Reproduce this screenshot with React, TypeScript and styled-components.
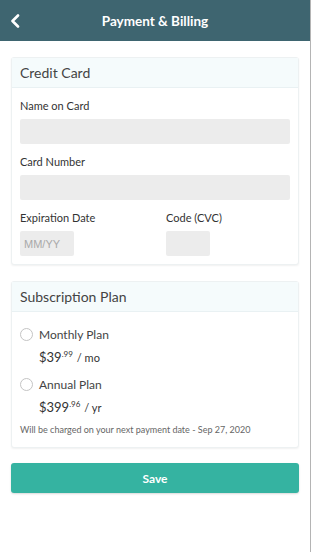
import styled, { createGlobalStyle } from 'styled-components';

const GlobalStyle = createGlobalStyle`
  html, body {
    margin: 0;
    padding: 0;
    background: #ffffff;
  }
  * {
    box-sizing: border-box;
  }
`;

const plans = [
    { name: 'Monthly Plan', whole: '$39', cents: '.99', per: '/ mo' },
    { name: 'Annual Plan', whole: '$399', cents: '.96', per: '/ yr' },
];

const App = () => {
    return (
        <Page>
            <GlobalStyle />
            {/* Header */}
            <TopBar>
                <BackButton aria-label="Back">
                    <svg width="12" height="14" viewBox="0 0 12 14">
                        <path d="M9 1.5 L3.5 7 L9 12.5" fill="none" stroke="#fff" strokeWidth="2.6" strokeLinecap="round" strokeLinejoin="round" />
                    </svg>
                </BackButton>
                <Title>Payment &amp; Billing</Title>
                <span />
            </TopBar>

            <Content>
                {/* Credit card */}
                <Card>
                    <CardHeader>Credit Card</CardHeader>
                    <CardBody>
                        <Field>
                            <Label>Name on Card</Label>
                            <Input />
                        </Field>
                        <Field>
                            <Label>Card Number</Label>
                            <Input />
                        </Field>
                        <FieldRow>
                            <Field>
                                <Label>Expiration Date</Label>
                                <Input placeholder="MM/YY" $width={54} />
                            </Field>
                            <Field>
                                <Label>Code (CVC)</Label>
                                <Input $width={44} />
                            </Field>
                        </FieldRow>
                    </CardBody>
                </Card>

                {/* Subscription */}
                <Card>
                    <CardHeader>Subscription Plan</CardHeader>
                    <PlanBody>
                        {plans.map((plan) => (
                            <PlanOption key={plan.name}>
                                <Radio type="radio" name="plan" />
                                <PlanText>
                                    <PlanName>{plan.name}</PlanName>
                                    <Price>
                                        {plan.whole}
                                        <Cents>{plan.cents}</Cents>
                                        <Per>{plan.per}</Per>
                                    </Price>
                                </PlanText>
                            </PlanOption>
                        ))}
                        <Note>Will be charged on your next payment date - Sep 27, 2020</Note>
                    </PlanBody>
                </Card>

                <SaveButton>Save</SaveButton>
            </Content>
        </Page>
    );
};

const Page = styled.div`
  width: 311px;
  min-height: 552px;
  border-right: 1px solid #b4b4b4;
  font-family: Lato, 'Open Sans', sans-serif;
  color: #333;
`;

const TopBar = styled.header`
  height: 41px;
  background: #3e6570;
  display: grid;
  grid-template-columns: 40px 1fr 40px;
  align-items: center;
`;

const BackButton = styled.button`
  background: none;
  border: none;
  padding: 0 0 0 9px;
  display: flex;
  align-items: center;
  cursor: pointer;
`;

const Title = styled.h1`
  margin: 0;
  text-align: center;
  color: #ffffff;
  font-size: 13.5px;
  font-weight: 700;
`;

const Content = styled.main`
  padding: 16px 11px 0 11px;
  display: flex;
  flex-direction: column;
  gap: 15px;
`;

const Card = styled.section`
  border: 1px solid #edf1f2;
  border-radius: 3px;
  box-shadow: 0 1px 2px rgba(0, 0, 0, 0.06);
  background: #fff;

  & + & {
    margin-top: 1px;
  }
`;

const CardHeader = styled.h2`
  margin: 0;
  height: 30px;
  padding: 0 8px;
  display: flex;
  align-items: center;
  background: #f5fbfc;
  border-bottom: 1px solid #e9f1f3;
  font-size: 14px;
  font-weight: 400;
  color: #444;
`;

const CardBody = styled.div`
  padding: 11px 8px 8px 8px;
  display: flex;
  flex-direction: column;
  gap: 11px;
`;

const Field = styled.div`
  display: flex;
  flex-direction: column;
  gap: 6px;
`;

const FieldRow = styled.div`
  display: grid;
  grid-template-columns: 146px 1fr;
`;

const Label = styled.label`
  font-size: 11px;
  line-height: 14px;
  color: #333;
`;

const Input = styled.input<{ $width?: number }>`
  width: ${(p) => (p.$width ? `${p.$width}px` : '100%')};
  height: 25px;
  border: none;
  border-radius: 2px;
  background: #ececec;
  padding: 0 4px;
  font-family: 'Liberation Sans', Arial, sans-serif;
  font-size: 11px;
  &::placeholder {
    color: #a9a9a9;
  }
`;

const PlanBody = styled.div`
  padding: 15px 8px 12px 8px;
  display: flex;
  flex-direction: column;
  gap: 11px;
`;

const PlanOption = styled.label`
  display: flex;
  align-items: flex-start;
  gap: 6px;
`;

const Radio = styled.input`
  appearance: none;
  width: 13px;
  height: 13px;
  margin: 1px 0 0 0;
  border: 1px solid #c4c4c4;
  border-radius: 50%;
  background: #fff;
`;

const PlanText = styled.div`
  display: flex;
  flex-direction: column;
  gap: 4px;
`;

const PlanName = styled.span`
  font-size: 12px;
  line-height: 15px;
  color: #444;
`;

const Price = styled.span`
  font-size: 13px;
  line-height: 16px;
  color: #333;
`;

const Cents = styled.sup`
  font-size: 8px;
  vertical-align: 5px;
`;

const Per = styled.span`
  font-size: 11px;
  margin-left: 4px;
`;

const Note = styled.p`
  margin: -3px 0 0 0;
  font-size: 9px;
  color: #666;
`;

const SaveButton = styled.button`
  height: 30px;
  border: none;
  border-radius: 3px;
  background: #35b3a1;
  color: #fff;
  font-family: Lato, 'Open Sans', sans-serif;
  font-size: 12px;
  font-weight: 700;
  box-shadow: 0 1px 2px rgba(0, 0, 0, 0.15);
  cursor: pointer;
`;

export default App;
